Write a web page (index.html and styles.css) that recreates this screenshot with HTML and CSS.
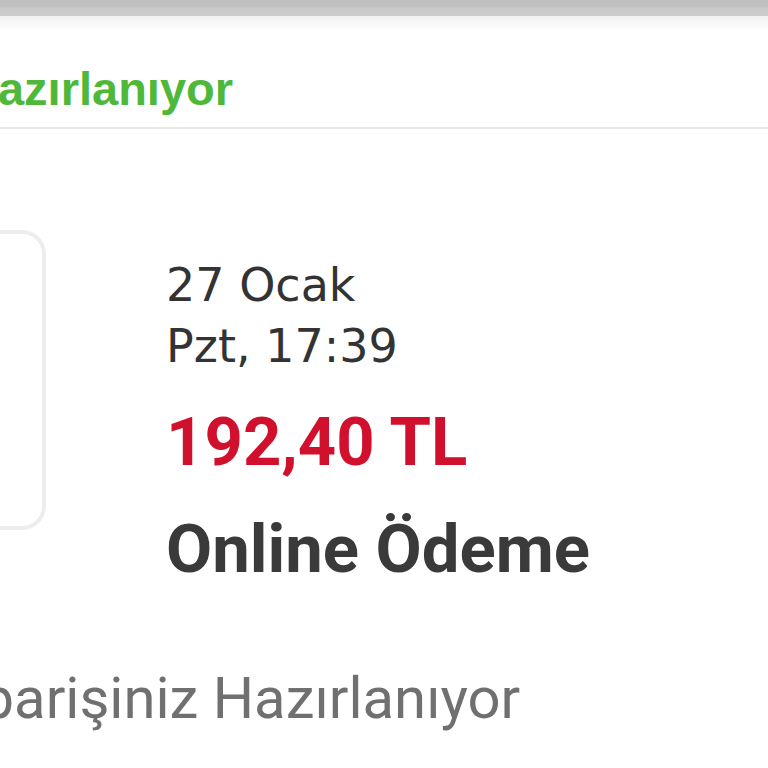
FILE: index.html
```html
<!DOCTYPE html>
<html lang="tr">
<head>
<meta charset="utf-8">
<title>Sipariş</title>
<link rel="stylesheet" href="styles.css">
</head>
<body>
<div class="page">
  <div class="topbar"></div>
  <div class="topshadow"></div>
  <div class="status">
    <span class="status-text">Hazırlanıyor</span>
  </div>
  <div class="order">
    <div class="thumb"></div>
    <div class="info">
      <div class="date">27 Ocak<br>Pzt, 17:39</div>
      <div class="price">192,40 TL</div>
      <div class="method">Online Ödeme</div>
    </div>
  </div>
  <div class="note">Siparişiniz Hazırlanıyor</div>
</div>
</body>
</html>
```
FILE: styles.css
```css
html, body {
  margin: 0;
  padding: 0;
  background: #ffffff;
}
.page {
  width: 768px;
  height: 768px;
  overflow: hidden;
  background: #ffffff;
}
.topbar {
  height: 16px;
  background: linear-gradient(#bfbfbf 0, #c1c1c1 7px, #c9c9c9 8px, #cbcbcb 16px);
}
.topshadow {
  height: 16px;
  background: linear-gradient(#f1f1f1, #ffffff);
}
.status {
  margin-top: 30px;
  padding-bottom: 11px;
  border-bottom: 2px solid #e8e8e8;
  white-space: nowrap;
}
.status-text {
  display: block;
  margin-left: -36px;
  font-family: "Liberation Sans", Arial, sans-serif;
  font-weight: 700;
  font-size: 47px;
  line-height: 54px;
  color: #4fb83a;
}
.order {
  display: flex;
  align-items: flex-start;
  margin-top: 101px;
}
.thumb {
  flex: none;
  width: 292px;
  height: 292px;
  margin-left: -254px;
  border: 4px solid #ededed;
  border-radius: 24px;
}
.info {
  margin-left: 120px;
  padding-top: 25px;
  white-space: nowrap;
}
.date {
  font-family: "DejaVu Sans", sans-serif;
  font-size: 46px;
  line-height: 61px;
  color: #333333;
}
.date-line {
  display: block;
}
.price {
  margin-top: 25px;
  font-family: Roboto, "Liberation Sans", sans-serif;
  font-weight: 700;
  font-size: 67px;
  line-height: 80px;
  color: #d0102d;
}
.method {
  margin-top: 27px;
  font-family: Roboto, "Liberation Sans", sans-serif;
  font-weight: 700;
  font-size: 67px;
  line-height: 80px;
  color: #3a3a3a;
}
.note {
  margin-top: 74px;
  margin-left: -67px;
  font-family: Roboto, "Liberation Sans", sans-serif;
  font-size: 58px;
  line-height: 70px;
  color: #707070;
  white-space: nowrap;
}
```
